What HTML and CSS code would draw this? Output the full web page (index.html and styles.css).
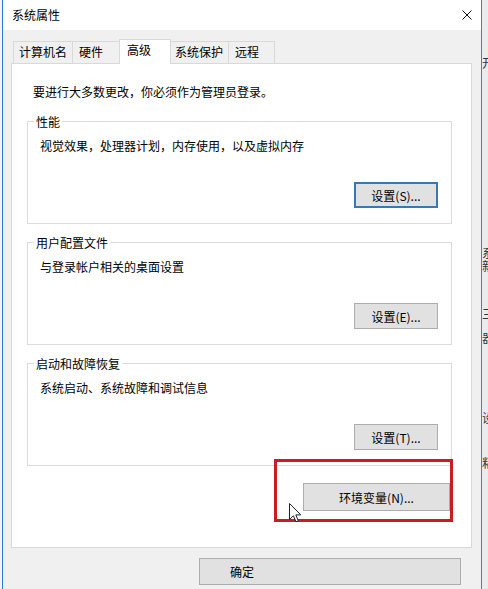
FILE: index.html
```html
<!DOCTYPE html>
<html>

<head>
  <title>系统属性</title>
  <meta charset="utf-8">
  <link rel="stylesheet" href="styles.css">
</head>

<body>
  <div class="screen">
    <div class="edge"></div>
    <div class="window">
      <div class="titlebar">
        <span class="title">系统属性</span>
        <svg class="close" viewBox="0 0 10 10">
          <path d="M0.5 0.5 L9.5 9.5 M9.5 0.5 L0.5 9.5" stroke="#111" stroke-width="1" fill="none" />
        </svg>
      </div>
      <div class="body">
        <div class="tabs">
          <div class="tab tab-name">计算机名</div>
          <div class="tab tab-hw">硬件</div>
          <div class="tab active">高级</div>
          <div class="tab tab-sys">系统保护</div>
          <div class="tab tab-remote">远程</div>
        </div>
        <div class="panel">
          <p class="intro">要进行大多数更改，你必须作为管理员登录。</p>
          <div class="group">
            <div class="group-title">性能</div>
            <p class="group-desc">视觉效果，处理器计划，内存使用，以及虚拟内存</p>
            <div class="group-actions">
              <button class="btn btn-set btn-focus">设置(S)...</button>
            </div>
          </div>
          <div class="group">
            <div class="group-title">用户配置文件</div>
            <p class="group-desc">与登录帐户相关的桌面设置</p>
            <div class="group-actions">
              <button class="btn btn-set">设置(E)...</button>
            </div>
          </div>
          <div class="group">
            <div class="group-title">启动和故障恢复</div>
            <p class="group-desc">系统启动、系统故障和调试信息</p>
            <div class="group-actions">
              <button class="btn btn-set">设置(T)...</button>
            </div>
          </div>
          <div class="env-row">
            <button class="btn btn-env">环境变量(N)...</button>
          </div>
        </div>
        <div class="footer">
          <button class="btn btn-ok">确定</button>
        </div>
      </div>
      <!-- annotation + mouse pointer over the dialog -->
      <div class="highlight"></div>
      <svg class="cursor" viewBox="0 0 13 20">
        <path d="M0.5 0.5 V16.5 L4.4 12.8 L7 18.8 L9.3 17.8 L6.8 11.9 H11.8 Z" fill="#fff" stroke="#222" stroke-width="1" stroke-linejoin="round" />
      </svg>
    </div>
    <div class="other">
      <span class="frag frag-a">开</span>
      <span class="frag frag-b">系</span>
      <span class="frag">新</span>
      <span class="frag frag-c">三</span>
      <span class="frag frag-d">器</span>
      <span class="frag frag-e">设</span>
      <span class="frag frag-f">粘</span>
    </div>
  </div>
</body>

</html>
```

FILE: styles.css
```css
* {
  padding: 0;
  margin: 0;
  box-sizing: border-box;
}

body {
  width: 488px;
  height: 589px;
  overflow: hidden;
  font-family: "Noto Sans CJK SC", "Microsoft YaHei", sans-serif;
  font-size: 12px;
  color: #000;
  background: #f4f4f4;
}

.screen {
  display: flex;
  height: 589px;
}

.edge {
  width: 2px;
  background: #f4f4f4;
}

.window {
  position: relative;
  width: 480px;
  border-left: 1px solid #2a7bd3;
  border-right: 1px solid #4d7fb0;
  background: #f0f0f0;
}

.titlebar {
  height: 30px;
  background: #fff;
  display: flex;
  align-items: center;
  justify-content: space-between;
  padding: 0 9px;
}

.title {
  line-height: 16px;
}

.close {
  width: 10px;
  height: 10px;
}

.body {
  padding: 9px 9px 0 8px;
}

.tabs {
  display: flex;
  align-items: flex-end;
  height: 24px;
  padding-left: 2px;
}

.tab {
  height: 22px;
  padding-top: 2px;
  line-height: 16px;
  border-top: 1px solid #d9d9d9;
  border-right: 1px solid #d9d9d9;
  background: #f0f0f0;
  white-space: nowrap;
}

.tab-name {
  width: 60px;
  padding-left: 5px;
  border-left: 1px solid #d9d9d9;
}

.tab-hw {
  width: 47px;
  padding-left: 6px;
}

.tab.active {
  position: relative;
  width: 52px;
  height: 25px;
  margin-left: -1px;
  margin-bottom: -1px;
  padding-left: 7px;
  border-left: 1px solid #d9d9d9;
  background: #fff;
}

.tab-sys {
  width: 58px;
  padding-left: 4px;
}

.tab-remote {
  width: 46px;
  padding-left: 6px;
}

.panel {
  height: 485px;
  padding-top: 20px;
  border: 1px solid #d9d9d9;
  background: #fff;
}

.intro {
  padding-left: 21px;
  line-height: 16px;
}

.group {
  margin: 21px 19px 0 15px;
  padding-bottom: 15px;
  border: 1px solid #dcdcdc;
}

.group + .group {
  margin-top: 18px;
}

.group-title {
  width: fit-content;
  margin: -8px 0 0 6px;
  padding: 0 2px;
  line-height: 16px;
  background: #fff;
}

.group-desc {
  margin-top: 8px;
  padding-left: 12px;
  line-height: 16px;
}

.group-actions {
  display: flex;
  justify-content: flex-end;
  margin-top: 28px;
  padding-right: 13px;
}

.btn {
  font: inherit;
  height: 26px;
  color: #000;
  background: #e1e1e1;
  border: 1px solid #adadad;
  text-align: center;
}

.btn-set {
  width: 84px;
}

.btn-focus {
  border: 2px solid #3b78b0;
}

.env-row {
  display: flex;
  justify-content: flex-end;
  margin-top: 17px;
  padding-right: 21px;
}

.btn-env {
  width: 147px;
  height: 28px;
}

.footer {
  display: flex;
  justify-content: flex-end;
  padding: 10px 11px 0 0;
}

.btn-ok {
  width: 262px;
  height: 27px;
  padding-left: 30px;
  text-align: left;
}

.highlight {
  position: absolute;
  left: 271px;
  top: 459px;
  width: 179px;
  height: 63px;
  border: 3px solid #cd1b22;
}

.cursor {
  position: absolute;
  left: 286px;
  top: 503px;
  width: 13px;
  height: 20px;
}

.other {
  width: 6px;
  overflow: hidden;
  display: flex;
  flex-direction: column;
  background: #e9ecef;
  color: #333;
  line-height: 13px;
}

.frag {
  white-space: nowrap;
}

.frag-a {
  margin-top: 56px;
}

.frag-b {
  margin-top: 177px;
}

.frag-c {
  margin-top: 35px;
}

.frag-d {
  margin-top: 11px;
}

.frag-e {
  margin-top: 67px;
}

.frag-f {
  margin-top: 32px;
}
```
